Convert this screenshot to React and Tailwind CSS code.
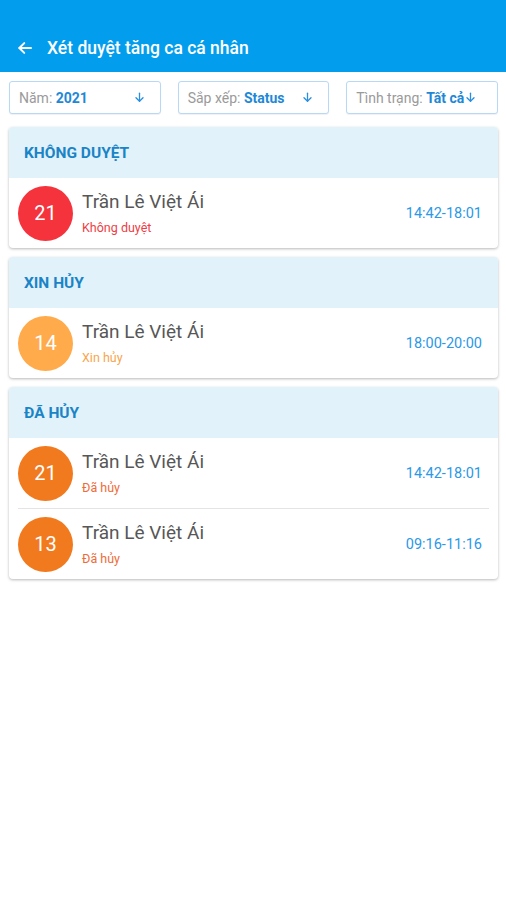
import React from "react";

function ArrowDown({ className }) {
  return (
    <svg viewBox="0 0 24 24" className={className} fill="none" stroke="currentColor" strokeWidth="2.4" strokeLinecap="round" strokeLinejoin="round">
      <path d="M12 4v15" />
      <path d="M5.5 12.5 12 19l6.5-6.5" />
    </svg>
  );
}

function Filter({ label, value, tight }) {
  return (
    <div className={"h-[33px] rounded-[3px] border border-[#b6d9f5] bg-white flex items-center pl-[9px] shadow-[0_1px_1px_rgba(0,0,0,0.06)] overflow-hidden " + (tight ? "pr-[4px]" : "pr-[7px] justify-between")}>
      <div className="text-[14px] whitespace-nowrap pt-[1px]">
        <span className="text-[#9a9a9a]">{label} </span>
        <span className="font-bold text-[#1e88d6]">{value}</span>
      </div>
      <ArrowDown className={"w-[13px] h-[13px] text-[#2a8fe0] shrink-0 " + (tight ? "" : "mr-[7px]")} />
    </div>
  );
}

function Item({ day, color, status, statusColor, time }) {
  return (
    <div className="h-[70px] flex items-center pl-[9px] pr-[16px]">
      <div className={"w-[55px] h-[55px] rounded-full flex items-center justify-center text-white text-[20px] shrink-0 " + color}>
        {day}
      </div>
      <div className="flex-1 ml-[9px] flex flex-col">
        <div className="text-[19px] leading-[22px] text-[#575757]">Trần Lê Việt Ái</div>
        <div className={"text-[12.5px] leading-[14px] mt-[8px] " + statusColor}>{status}</div>
      </div>
      <div className="text-[14.5px] text-[#2b98e8] pt-[1px]">{time}</div>
    </div>
  );
}

function Card({ title, children }) {
  return (
    <div className="rounded-[4px] bg-white overflow-hidden shadow-[0_1px_3px_rgba(0,0,0,0.28)]">
      <div className="h-[51px] bg-[#e1f2fb] flex items-center pl-[15px] pt-[2px]">
        <span className="text-[15.5px] font-bold text-[#1a84c6]">{title}</span>
      </div>
      {children}
    </div>
  );
}

export default function App() {
  return (
    <div className="w-[506px] h-[900px] bg-white" style={{ fontFamily: "Roboto, 'Noto Sans', sans-serif" }}>
      <div className="h-[72px] bg-[#039ded] flex items-end pb-[14px] pl-[16px]">
        <svg viewBox="0 0 24 24" className="w-[18px] h-[18px] text-white mb-[1px]" fill="none" stroke="currentColor" strokeWidth="2.6" strokeLinecap="round" strokeLinejoin="round">
          <path d="M20 12H4.5" />
          <path d="M11 5.5 4.5 12l6.5 6.5" />
        </svg>
        <span className="ml-[13px] text-[17.5px] font-medium text-white leading-[20px]">Xét duyệt tăng ca cá nhân</span>
      </div>
      <div className="grid grid-cols-3 gap-[17px] pl-[9px] pr-[8px] pt-[9px]">
        <Filter label="Năm:" value="2021" />
        <Filter label="Sắp xếp:" value="Status" />
        <Filter label="Tình trạng:" value="Tất cả" tight />
      </div>
      <div className="flex flex-col gap-[9px] pl-[9px] pr-[8px] pt-[13px]">
        <Card title="KHÔNG DUYỆT">
          <Item day="21" color="bg-[#f5333c]" status="Không duyệt" statusColor="text-[#ee3d45]" time="14:42-18:01" />
        </Card>
        <Card title="XIN HỦY">
          <Item day="14" color="bg-[#ffab4c]" status="Xin hủy" statusColor="text-[#f8a54c]" time="18:00-20:00" />
        </Card>
        <Card title="ĐÃ HỦY">
          <div>
            <Item day="21" color="bg-[#f27a1e]" status="Đã hủy" statusColor="text-[#ee6c3a]" time="14:42-18:01" />
            <div className="mx-[9px] h-px bg-[#e4e4e4]" />
          </div>
          <Item day="13" color="bg-[#f27a1e]" status="Đã hủy" statusColor="text-[#ee6c3a]" time="09:16-11:16" />
        </Card>
      </div>
    </div>
  );
}
